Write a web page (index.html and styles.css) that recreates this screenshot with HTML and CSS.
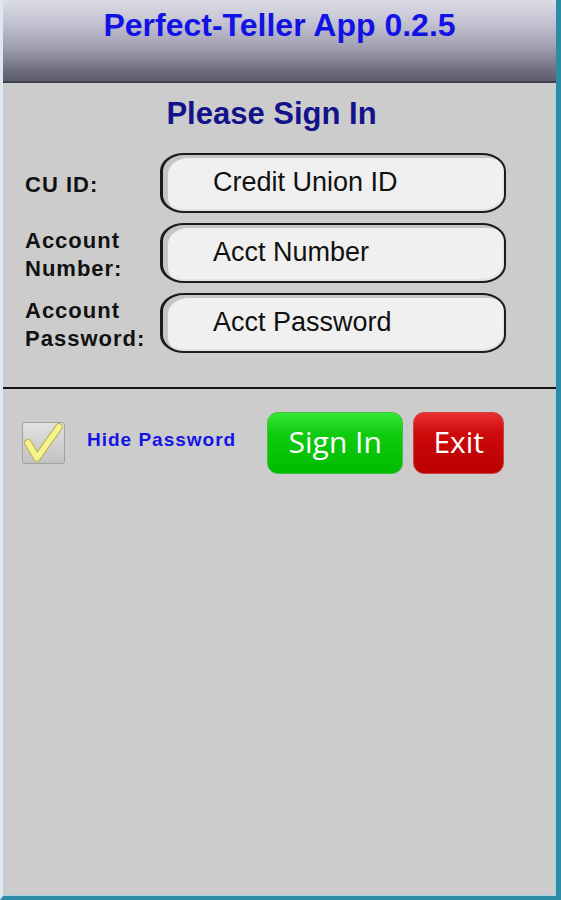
FILE: index.html
```html
<!DOCTYPE html>
<html lang="en">
<head>
<meta charset="utf-8">
<title>Perfect-Teller App</title>
<link rel="stylesheet" href="styles.css">
</head>
<body>
<div class="app">
  <header class="topbar">
    <h1 class="title">Perfect-Teller App 0.2.5</h1>
  </header>
  <main class="content">
    <h2 class="heading">Please Sign In</h2>
    <div class="form">
      <div class="row">
        <label class="label">CU ID:</label>
        <div class="field">Credit Union ID</div>
      </div>
      <div class="row">
        <label class="label">Account<br>Number:</label>
        <div class="field">Acct Number</div>
      </div>
      <div class="row">
        <label class="label">Account<br>Password:</label>
        <div class="field">Acct Password</div>
      </div>
    </div>
    <div class="separator"></div>
    <div class="actions">
      <div class="checkbox">
        <svg width="43" height="42" viewBox="0 0 43 42">
          <polyline points="6,21 15,36 37,5" fill="none" stroke="#bdb85e" stroke-width="8" stroke-linecap="round" stroke-linejoin="round"/>
          <polyline points="6,21 15,36 37,5" fill="none" stroke="#f7f38e" stroke-width="5.5" stroke-linecap="round" stroke-linejoin="round"/>
        </svg>
      </div>
      <span class="hide-label">Hide Password</span>
      <button class="btn btn-green">Sign In</button>
      <button class="btn btn-red">Exit</button>
    </div>
  </main>
</div>
</body>
</html>
```
FILE: styles.css
```css
* { box-sizing: border-box; }
html, body { margin: 0; padding: 0; }
body { width: 561px; height: 900px; background: #cccccc; font-family: "Liberation Sans", Arial, sans-serif; }
.app {
  width: 561px;
  height: 900px;
  background: #cccccc;
  border-left: 3px solid #dde8f2;
  border-right: 5px solid #2a8da5;
  border-bottom: 4px solid #2a8da5;
  box-shadow: inset -1px 0 0 #9fd4e2, inset 0 -1px 0 #9fd4e2;
}
.topbar {
  height: 83px;
  background: linear-gradient(to bottom, #dcdce8 0%, #c6c6d4 25%, #a0a0b2 58%, #6c6c7e 88%, #5c5c6c 100%);
  border-bottom: 2px solid #3f3f4e;
  padding-top: 7px;
}
.title {
  margin: 0;
  text-align: center;
  font-size: 32px;
  line-height: 36px;
  font-weight: bold;
  color: #1212e6;
}
.content { padding: 0; }
.heading {
  margin: 13px 0 0 0;
  text-align: center;
  font-size: 31px;
  line-height: 36px;
  font-weight: bold;
  color: #12128a;
  padding-right: 16px;
}
.form {
  display: flex;
  flex-direction: column;
  gap: 10px;
  margin-top: 21px;
  padding-left: 22px;
}
.row {
  display: flex;
  align-items: center;
  height: 60px;
}
.label {
  width: 135px;
  font-size: 22px;
  line-height: 28px;
  font-weight: bold;
  color: #111;
  letter-spacing: 1px;
  padding-top: 4px;
}
.field {
  width: 346px;
  height: 60px;
  border: 2px solid #1c1c1c;
  border-left-width: 3px;
  border-radius: 24px / 18px;
  background: #f0f0f0;
  box-shadow: inset 5px 3px 0 #c6c6c6, inset -1px -2px 0 #e2e2e2;
  padding-left: 50px;
  font-size: 27px;
  line-height: 54px;
  color: #111;
}
.separator {
  height: 2px;
  background: #151515;
  margin-top: 34px;
}
.actions {
  display: flex;
  align-items: center;
  margin-top: 23px;
  padding-left: 19px;
}
.checkbox {
  width: 43px;
  height: 42px;
  border: 1px solid #a2a2a2;
  border-radius: 3px;
  background: linear-gradient(to bottom, #e2e2e2, #c2c2c2);
}
.checkbox svg { display: block; margin: -1px 0 0 -1px; }
.hide-label {
  margin-left: 22px;
  font-size: 19px;
  font-weight: bold;
  color: #1414e6;
  letter-spacing: 1px;
  margin-top: -6px;
}
.btn {
  height: 62px;
  border-radius: 11px;
  font-family: "Open Sans", "DejaVu Sans", sans-serif;
  font-size: 30px;
  color: #ffffff;
  padding: 0 0 4px 0;
  cursor: pointer;
}
.btn-green {
  width: 136px;
  margin-left: 31px;
  background: linear-gradient(to bottom, #36e836 0%, #10cc10 35%, #00bb00 100%);
  border: 1px solid #40c040;
}
.btn-red {
  width: 91px;
  margin-left: 10px;
  background: linear-gradient(to bottom, #e83030 0%, #cc0a0a 35%, #bb0000 100%);
  border: 1px solid #d04040;
}
```
